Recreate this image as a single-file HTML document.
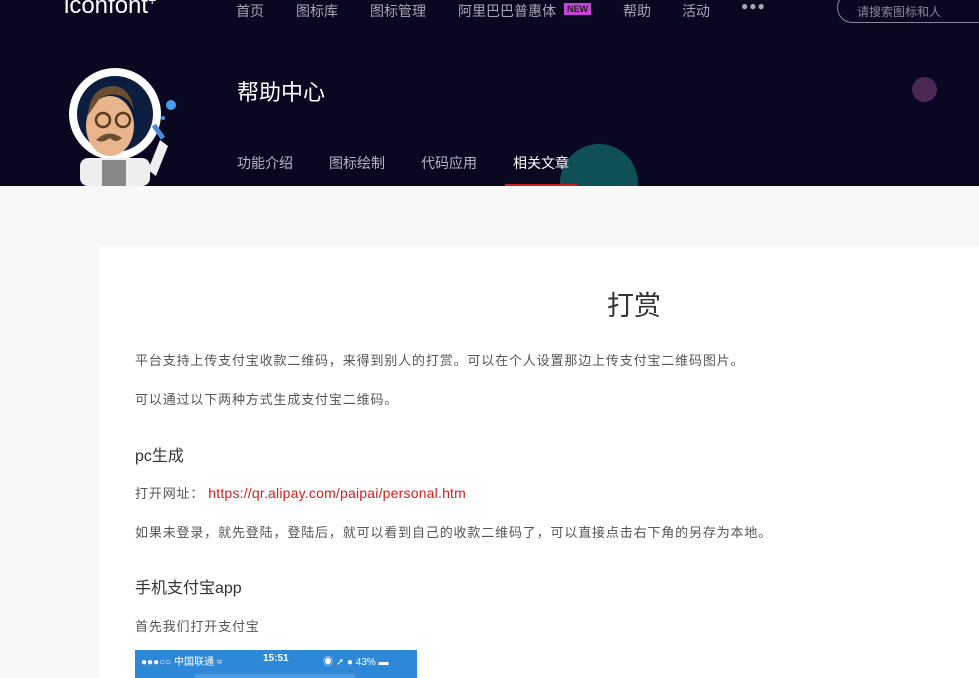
<!DOCTYPE html>
<html><head><meta charset="utf-8"><style>
*{margin:0;padding:0;box-sizing:border-box}
body{width:979px;height:678px;overflow:hidden;background:#f8f8f8;font-family:"Liberation Sans","Noto Sans CJK SC",sans-serif;position:relative}
.hd{position:absolute;left:0;top:0;width:979px;height:186px;background:#0a0720;overflow:hidden}
.t{position:absolute;white-space:nowrap}
.nav{color:#a8a6b4;font-size:14px;top:1px}
.card{position:absolute;left:100px;top:247px;width:879px;height:431px;background:#fff}
.p{position:absolute;left:135px;font-size:13px;color:#555;white-space:nowrap;letter-spacing:0.85px}
.h{position:absolute;left:135px;font-size:16px;color:#333;white-space:nowrap}
</style></head><body>
<div class="hd">
 <div class="t" style="left:64px;top:-8px;color:#fff;font-size:24px">iconfont<span style="font-size:14px;vertical-align:top">+</span></div>
 <div class="t nav" style="left:236px">首页</div>
 <div class="t nav" style="left:296px">图标库</div>
 <div class="t nav" style="left:370px">图标管理</div>
 <div class="t nav" style="left:458px">阿里巴巴普惠体</div>
 <div class="t" style="left:564px;top:3px;background:#c844d8;color:#222;font-size:9px;font-weight:bold;padding:1px 3px">NEW</div>
 <div class="t nav" style="left:623px">帮助</div>
 <div class="t nav" style="left:682px">活动</div>
 <div class="t" style="left:741px;top:-1px;color:#a8a6b4;font-size:12px;letter-spacing:1px">●●●</div>
 <div class="t" style="left:837px;top:-8px;width:160px;height:31px;border:1px solid #8a879a;border-radius:16px;color:#8a879a;font-size:12px;padding:10px 0 0 19px">请搜索图标和人</div>
 <div class="t" style="left:237px;top:75px;color:#fff;font-size:22px">帮助中心</div>
 <div class="t" style="left:912px;top:77px;width:25px;height:25px;border-radius:50%;background:#4a2a55"></div>
 <div class="t" style="left:560px;top:144px;width:78px;height:78px;border-radius:50%;background:#0e5056"></div>
 <div class="t" style="left:237px;top:153px;color:#b8b6c4;font-size:14px">功能介绍</div>
 <div class="t" style="left:329px;top:153px;color:#b8b6c4;font-size:14px">图标绘制</div>
 <div class="t" style="left:421px;top:153px;color:#b8b6c4;font-size:14px">代码应用</div>
 <div class="t" style="left:513px;top:153px;color:#fff;font-size:14px">相关文章</div>
 <div class="t" style="left:505px;top:184px;width:72px;height:2px;background:#d0201e"></div>
 <svg class="t" style="left:60px;top:60px" width="120" height="126" viewBox="0 0 120 126">
  <circle cx="55" cy="54" r="46" fill="#fff"/>
  <circle cx="55" cy="54" r="38" fill="#0d1d40"/>
  <ellipse cx="50" cy="66" rx="24" ry="30" fill="#e8b48c"/>
  <path d="M28 55 Q30 26 55 26 Q70 28 74 50 L68 40 Q55 30 40 38 Z" fill="#6a4e30"/>
  <circle cx="43" cy="60" r="7" fill="none" stroke="#5a3a1e" stroke-width="2.5"/>
  <circle cx="63" cy="60" r="7" fill="none" stroke="#5a3a1e" stroke-width="2.5"/>
  <path d="M36 80 Q48 68 62 78 Q56 84 50 78 Q42 84 36 80Z" fill="#6a4e30"/>
  <rect x="20" y="98" width="70" height="28" rx="8" fill="#eee"/>
  <rect x="42" y="100" width="24" height="26" fill="#888"/>
  <path d="M88 110 L100 80 L108 86 L96 116Z" fill="#eee"/>
  <rect x="96" y="64" width="5" height="16" fill="#4a8ad8" transform="rotate(-35 98 72)"/>
  <circle cx="111" cy="45" r="5" fill="#4a9af0"/>
  <circle cx="103" cy="58" r="2" fill="#4a9af0"/>
 </svg>
</div>
<div class="card"></div>
<div class="t" style="left:607px;top:284px;font-size:27px;color:#333">打赏</div>
<div class="p" style="top:350px">平台支持上传支付宝收款二维码，来得到别人的打赏。可以在个人设置那边上传支付宝二维码图片。</div>
<div class="p" style="top:389px">可以通过以下两种方式生成支付宝二维码。</div>
<div class="h" style="top:442px">pc生成</div>
<div class="p" style="top:483px">打开网址：<span style="color:#d0201e;font-size:14px;letter-spacing:0.2px;margin-left:4px">https://qr.alipay.com/paipai/personal.htm</span></div>
<div class="p" style="top:522px">如果未登录，就先登陆，登陆后，就可以看到自己的收款二维码了，可以直接点击右下角的另存为本地。</div>
<div class="h" style="top:574px">手机支付宝app</div>
<div class="p" style="top:616px">首先我们打开支付宝</div>
<div class="t" style="left:135px;top:650px;width:282px;height:28px;background:#2e88d8;color:#fff;font-size:10px">
 <span class="t" style="left:6px;top:3px">●●●○○ 中国联通 ≈</span>
 <span class="t" style="left:128px;top:3px;font-weight:bold">15:51</span>
 <span class="t" style="left:188px;top:3px">◉ ➚ ● 43% ▬</span>
 <span class="t" style="left:60px;top:24px;width:160px;height:4px;background:#4d9ae0"></span>
</div>
</body></html>
